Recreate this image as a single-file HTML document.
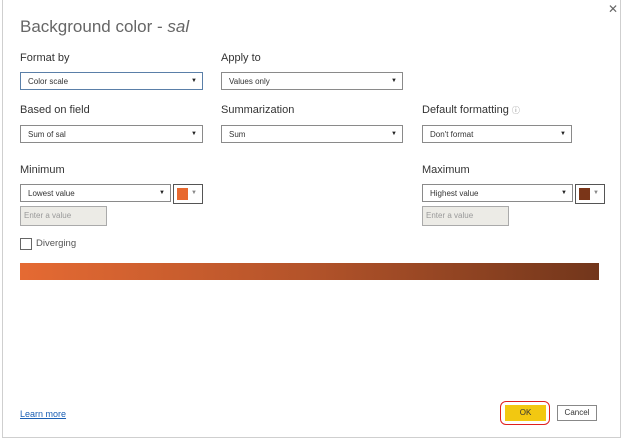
<!DOCTYPE html>
<html><head><style>
body{margin:0;width:624px;height:441px;background:#fff;font-family:"Liberation Sans",sans-serif;position:relative;overflow:hidden}
.a{position:absolute}
.lbl{font-size:11px;color:#333}
.dd{position:absolute;height:18px;border:1px solid #8a8a8a;background:#fff;font-size:8px;color:#333;box-sizing:border-box;line-height:17px;padding-left:7px}
.dd:after{content:"▼";position:absolute;right:5px;top:0;font-size:6px;color:#222}
.ev{position:absolute;height:20px;border:1px solid #aaa;background:#ecebe6;font-size:8px;color:#999;box-sizing:border-box;line-height:18px;padding-left:3px}
.sw{position:absolute;width:30px;height:20px;border:1px solid #555;box-sizing:border-box;background:#fff}
.sw i{position:absolute;left:3px;top:3px;width:11px;height:12px}
.sw b{position:absolute;right:5px;top:5px;font-size:6px;color:#888;font-weight:normal}
</style></head><body>
<div class="a" style="left:2px;top:0;width:619px;height:438px;border:1px solid #cfcfcf;border-top:none;box-sizing:border-box"></div>
<div class="a" style="left:608px;top:2px;font-size:12px;color:#666">✕</div>
<div class="a" style="left:20px;top:17px;font-size:17px;color:#666">Background color - <i>sal</i></div>
<div class="a lbl" style="left:20px;top:52px">Format by</div>
<div class="a lbl" style="left:221px;top:52px">Apply to</div>
<div class="dd" style="left:20px;top:72px;width:183px;border-color:#5a7fa8">Color scale</div>
<div class="dd" style="left:221px;top:72px;width:182px">Values only</div>
<div class="a lbl" style="left:20px;top:104px">Based on field</div>
<div class="a lbl" style="left:221px;top:104px">Summarization</div>
<div class="a lbl" style="left:422px;top:104px">Default formatting <span style="font-size:8px;color:#888">ⓘ</span></div>
<div class="dd" style="left:20px;top:125px;width:183px">Sum of sal</div>
<div class="dd" style="left:221px;top:125px;width:182px">Sum</div>
<div class="dd" style="left:422px;top:125px;width:150px">Don't format</div>
<div class="a lbl" style="left:20px;top:164px">Minimum</div>
<div class="a lbl" style="left:422px;top:164px">Maximum</div>
<div class="dd" style="left:20px;top:184px;width:151px">Lowest value</div>
<div class="sw" style="left:173px;top:184px"><i style="background:#e8692f"></i><b>▼</b></div>
<div class="ev" style="left:20px;top:206px;width:87px">Enter a value</div>
<div class="dd" style="left:422px;top:184px;width:151px">Highest value</div>
<div class="sw" style="left:575px;top:184px"><i style="background:#7a3518"></i><b>▼</b></div>
<div class="ev" style="left:422px;top:206px;width:87px">Enter a value</div>
<div class="a" style="left:20px;top:238px;width:10px;height:10px;border:1px solid #666"></div>
<div class="a" style="left:36px;top:238px;font-size:9.5px;color:#555">Diverging</div>
<div class="a" style="left:20px;top:263px;width:579px;height:17px;background:linear-gradient(90deg,#e56a33,#b3532a 50%,#72361b)"></div>
<div class="a" style="left:20px;top:409px;font-size:9px;color:#1a5fb4;text-decoration:underline">Learn more</div>
<div class="a" style="left:505px;top:405px;width:41px;height:16px;background:#f2c811;font-size:8px;text-align:center;line-height:16px;color:#333">OK</div>
<div class="a" style="left:500px;top:401px;width:50px;height:24px;border:1.5px solid #e02020;border-radius:6px;box-sizing:border-box"></div>
<div class="a" style="left:557px;top:405px;width:40px;height:16px;border:1px solid #888;box-sizing:border-box;font-size:8px;text-align:center;line-height:14px;color:#333">Cancel</div>
</body></html>
